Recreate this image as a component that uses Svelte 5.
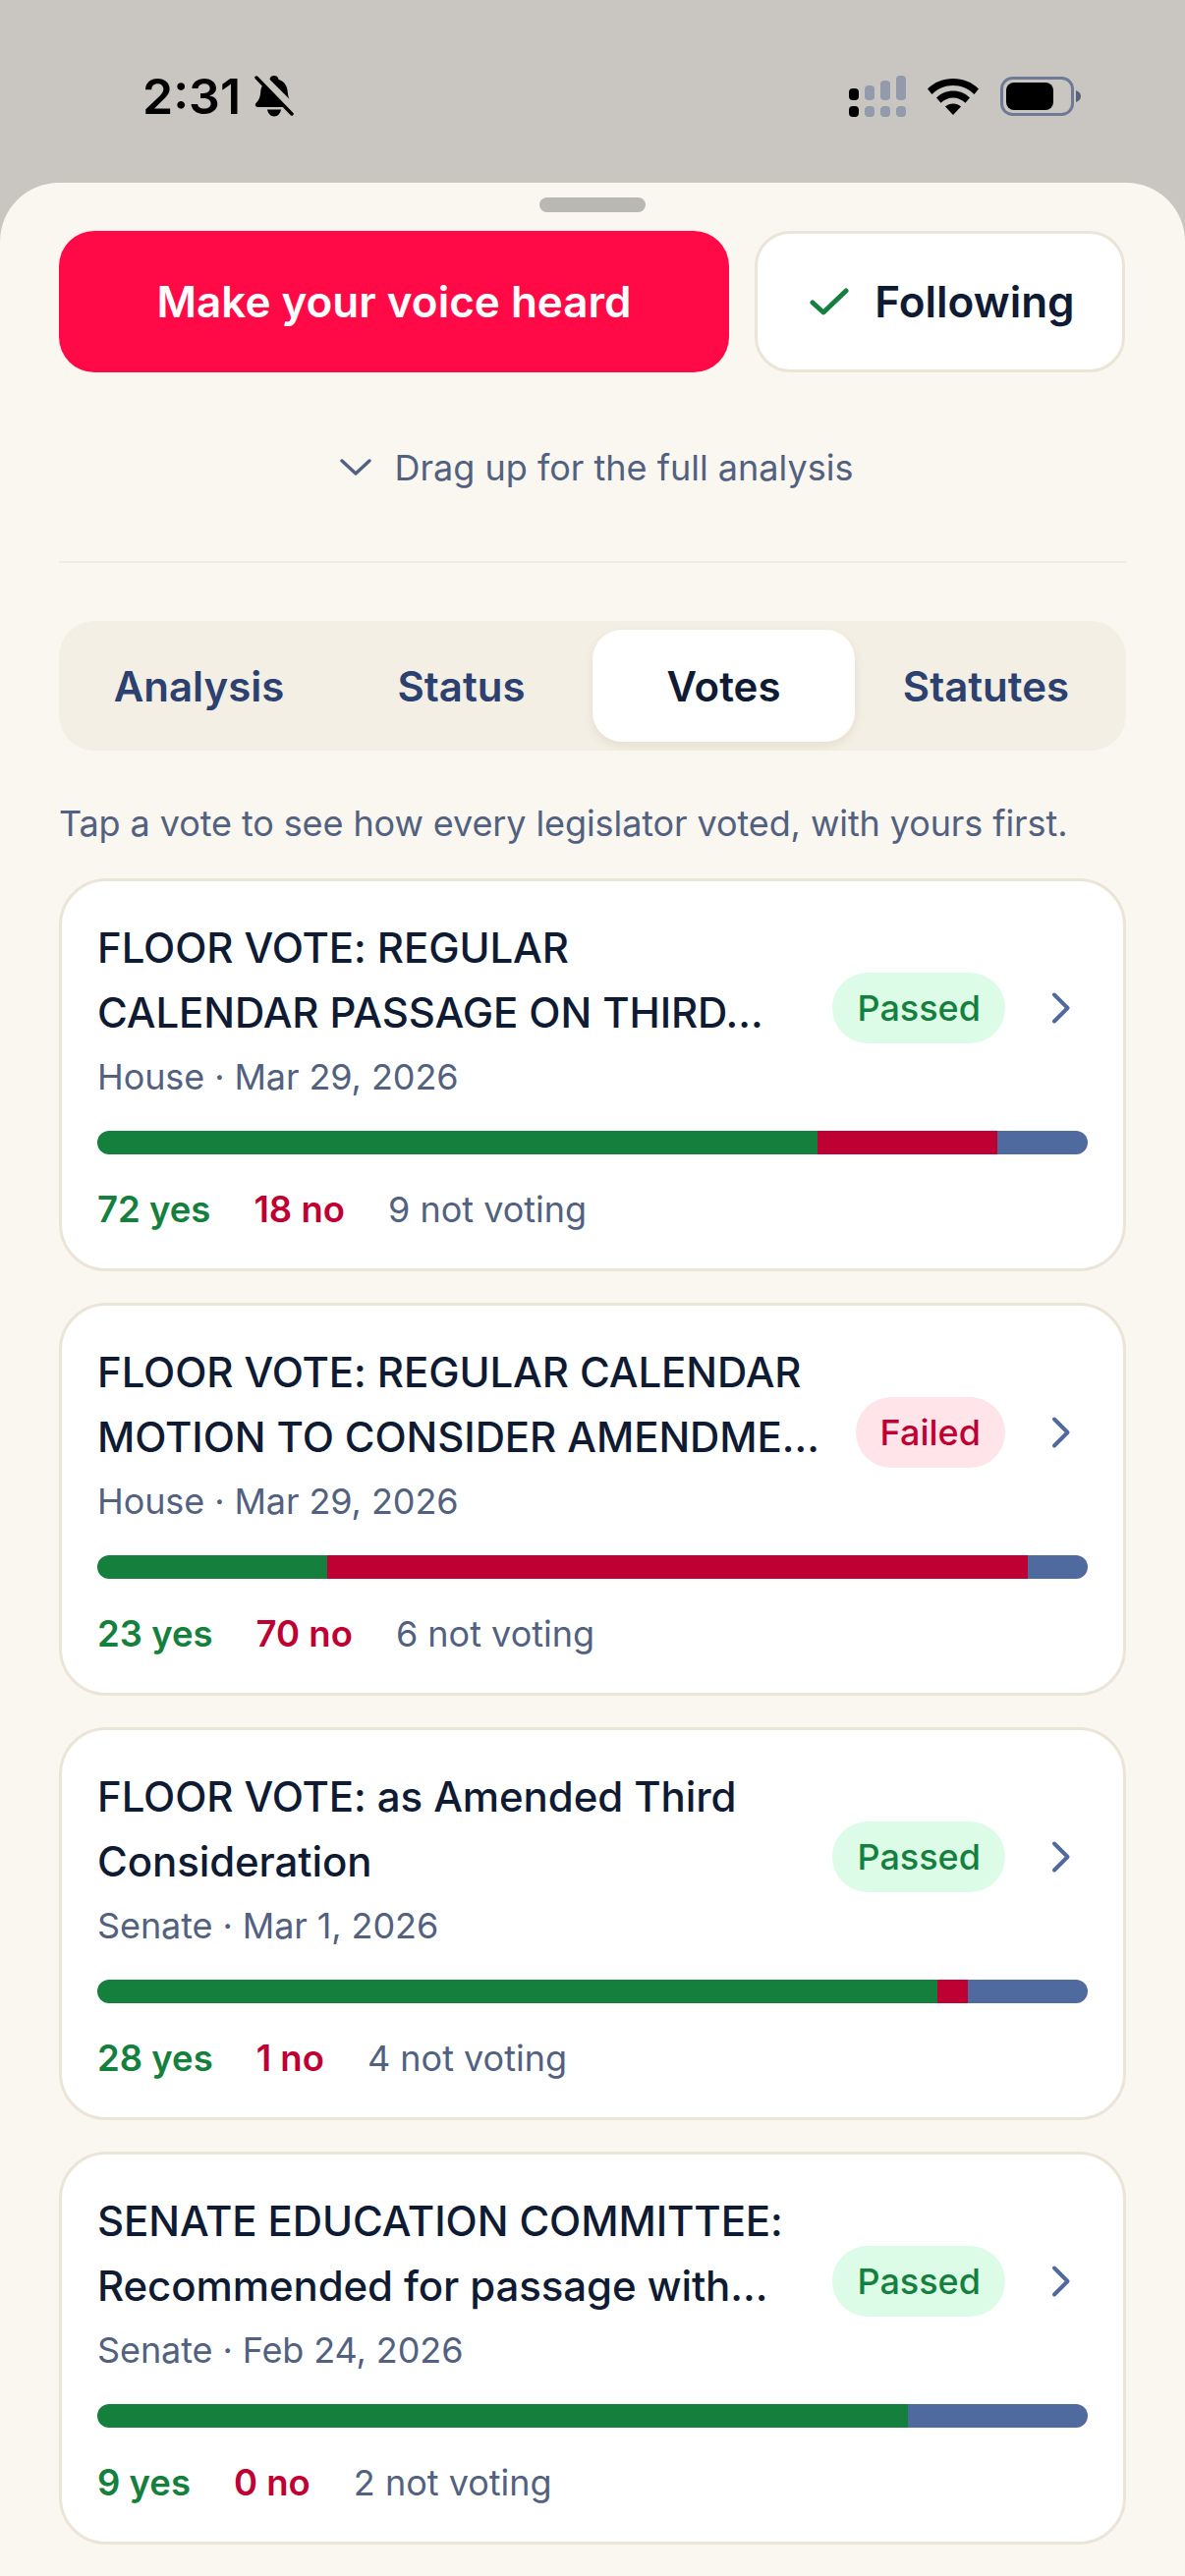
<script lang="ts">
  const tabs = ['Analysis', 'Status', 'Votes', 'Statutes'];

  const votes = [
    { title: 'FLOOR VOTE: REGULAR CALENDAR PASSAGE ON THIRD…', meta: 'House · Mar 29, 2026', status: 'Passed', yes: 72, no: 18, nv: 9 },
    { title: 'FLOOR VOTE: REGULAR CALENDAR MOTION TO CONSIDER AMENDME…', meta: 'House · Mar 29, 2026', status: 'Failed', yes: 23, no: 70, nv: 6 },
    { title: 'FLOOR VOTE: as Amended Third Consideration', meta: 'Senate · Mar 1, 2026', status: 'Passed', yes: 28, no: 1, nv: 4 },
    { title: 'SENATE EDUCATION COMMITTEE: Recommended for passage with…', meta: 'Senate · Feb 24, 2026', status: 'Passed', yes: 9, no: 0, nv: 2 }
  ];
</script>

<div class="screen">
  <header class="status-bar">
    <div class="clock">
      <span class="time">2:31</span>
      <svg class="bell" viewBox="0 0 40 42" width="40" height="42">
        <path d="M20 0c2.600 0 4.200 1.700 4.600 3.900 6.200 1.900 8.800 7 9.200 13.100 .3 4.800 1.700 7.900 4.700 11.100 1.300 1.500.5 3.900-1.700 3.900H3.200C1 32 .2 29.600 1.500 28.100c3-3.200 4.400-6.300 4.700-11.100 .4-6.100 3-11.200 9.200-13.100C15.800 1.700 17.400 0 20 0z" fill="#000"/>
        <path d="M13 34.500h14c-.7 4.200-3.500 7-7 7s-6.300-2.800-7-7z" fill="#000"/>
        <path d="M3 -3 L45 39" stroke="#c9c6c1" stroke-width="8"/>
        <path d="M2 2 L38 39" stroke="#000" stroke-width="3.500" stroke-linecap="round"/>
      </svg>
    </div>
    <div class="indicators">
      <svg viewBox="0 0 58 42" width="58" height="42">
        <g fill="#929aab">
          <rect x="16" y="10" width="10" height="15" rx="4"/>
          <rect x="32" y="5" width="10" height="20" rx="4"/>
          <rect x="48" y="0" width="10" height="25" rx="4"/>
          <rect x="16" y="31" width="10" height="11" rx="4"/>
          <rect x="32" y="31" width="10" height="11" rx="4"/>
          <rect x="48" y="31" width="10" height="11" rx="4"/>
        </g>
        <rect x="0" y="13" width="10" height="12" rx="4"/>
        <rect x="0" y="31" width="10" height="11" rx="4"/>
      </svg>
      <svg viewBox="0 0 52 38" width="52" height="38">
        <path d="M0 11.500C7 4.500 16 1 26 1s19 3.500 26 10.500L47.500 17C41.500 11 34 8 26 8S10.500 11 4.500 17z"/>
        <path d="M9 20.500C13.500 16 19.500 13.500 26 13.500s12.500 2.500 17 7l-4.500 5.200C35 22.500 30.500 20.500 26 20.500s-9 2-12.500 5.200z"/>
        <path d="M18 29.500c2.200-2 5-3 8-3s5.800 1 8 3L26 38z"/>
      </svg>
      <svg viewBox="0 0 83 40" width="83" height="40">
        <rect x="1.500" y="1.500" width="72" height="37" rx="11" fill="none" stroke="#6f7b96" stroke-width="3"/>
        <rect x="6" y="6" width="48" height="28" rx="8"/>
        <path d="M77 14c3 1 5 3 5 6s-2 5-5 6z" fill="#56617a"/>
      </svg>
    </div>
  </header>

  <main class="sheet">
    <div class="handle"></div>

    <div class="actions">
      <button class="voice">Make your voice heard</button>
      <button class="following">
        <svg viewBox="0 0 40 28" width="40" height="28">
          <path d="M3 15 L14 25 L37 3" fill="none" stroke="#15803d" stroke-width="5" stroke-linecap="round" stroke-linejoin="round"/>
        </svg>
        Following
      </button>
    </div>

    <div class="drag">
      <svg viewBox="0 0 32 18" width="32" height="18">
        <path d="M2 2 L16 15 L30 2" fill="none" stroke="#52617f" stroke-width="3.400" stroke-linecap="round" stroke-linejoin="round"/>
      </svg>
      <span>Drag up for the full analysis</span>
    </div>

    <hr class="divider" />

    <nav class="tabs">
      {#each tabs as tab}
        <div class="tab" class:active={tab === 'Votes'}>{tab}</div>
      {/each}
    </nav>

    <p class="hint">Tap a vote to see how every legislator voted, with yours first.</p>

    <div class="cards">
      {#each votes as vote}
        <article class="card">
          <div class="head">
            <div class="info">
              <h3>{vote.title}</h3>
              <p class="meta">{vote.meta}</p>
            </div>
            <span class="badge" class:failed={vote.status === 'Failed'}>{vote.status}</span>
            <svg class="chev" viewBox="0 0 48 48" width="48" height="48">
              <path d="M14 10.500 L27.500 24 L14 37.500" fill="none" stroke="#4f6a9f" stroke-width="4" stroke-linecap="round" stroke-linejoin="round"/>
            </svg>
          </div>
          <div class="bar">
            <span class="seg yes" style="flex-grow: {vote.yes}"></span>
            <span class="seg no" style="flex-grow: {vote.no}"></span>
            <span class="seg nv" style="flex-grow: {vote.nv}"></span>
          </div>
          <div class="counts">
            <span class="c-yes">{vote.yes} yes</span>
            <span class="c-no">{vote.no} no</span>
            <span class="c-nv">{vote.nv} not voting</span>
          </div>
        </article>
      {/each}
    </div>
  </main>
</div>

<style>
  :global(body) {
    margin: 0;
    background: #c9c6c1;
  }

  .screen {
    width: 1206px;
    height: 2622px;
    overflow: hidden;
    font-family: Inter, "Noto Sans", sans-serif;
    background: #c9c6c1;
  }

  .status-bar {
    height: 186px;
    box-sizing: border-box;
    padding: 10px 105px 0 145px;
    display: flex;
    align-items: center;
    justify-content: space-between;
    color: #000;
  }

  .clock {
    display: flex;
    align-items: center;
    gap: 14px;
  }

  .time {
    font-size: 50px;
    font-weight: 600;
    line-height: 1;
  }

  .indicators {
    display: flex;
    align-items: center;
    gap: 22px;
  }

  .sheet {
    background: #faf7f0;
    border-radius: 60px 60px 0 0;
    padding: 15px 60px 0;
    height: 2436px;
    box-sizing: border-box;
  }

  .handle {
    width: 108px;
    height: 15px;
    border-radius: 8px;
    background: #b9b8b5;
    margin: 0 auto 19px;
  }

  .actions {
    display: flex;
    gap: 26px;
  }

  button {
    font-family: inherit;
    height: 144px;
    box-sizing: border-box;
    border-radius: 36px;
    font-size: 44px;
    font-weight: 600;
    display: flex;
    align-items: center;
    justify-content: center;
  }

  .voice {
    width: 682px;
    border: none;
    background: #ff0a47;
    color: #fff;
  }

  .following {
    width: 377px;
    gap: 26px;
    padding: 0 0 0 5px;
    background: #fff;
    border: 3px solid #ebe5d8;
    color: #0f1b33;
  }

  .drag {
    display: flex;
    align-items: center;
    justify-content: center;
    gap: 24px;
    margin-top: 73px;
    padding-left: 8px;
    height: 48px;
    font-size: 36px;
    color: #52617f;
  }

  .divider {
    border: none;
    height: 2px;
    background: #f1ece1;
    margin: 71px 0 59px;
  }

  .tabs {
    height: 132px;
    box-sizing: border-box;
    padding: 9px;
    display: grid;
    grid-template-columns: repeat(4, 1fr);
    background: #f3efe4;
    border-radius: 36px;
  }

  .tab {
    display: flex;
    align-items: center;
    justify-content: center;
    border-radius: 30px;
    font-size: 42px;
    font-weight: 560;
    color: #2c4170;
  }

  .tab.active {
    background: #fff;
    color: #0f1b33;
    box-shadow: 0 4px 10px rgba(120, 105, 70, 0.12);
  }

  .hint {
    margin: 50px 0 32px;
    font-size: 36px;
    letter-spacing: -0.1px;
    line-height: 48px;
    color: #52617f;
  }

  .cards {
    display: flex;
    flex-direction: column;
    gap: 32px;
  }

  .card {
    height: 400px;
    box-sizing: border-box;
    background: #fff;
    border: 3px solid #ebe5d8;
    border-radius: 48px;
    padding: 35px 36px 0;
  }

  .head {
    display: flex;
    align-items: center;
    gap: 36px;
  }

  .info {
    flex: 1;
    min-width: 0;
  }

  h3 {
    margin: 0;
    font-size: 42px;
    line-height: 66px;
    font-weight: 540;
    letter-spacing: -0.1px;
    color: #0f1b33;
  }

  .meta {
    margin: 8px 0 0;
    font-size: 36px;
    letter-spacing: -0.1px;
    line-height: 48px;
    color: #52617f;
  }

  .badge {
    flex: none;
    height: 72px;
    padding: 0 25px;
    display: flex;
    align-items: center;
    border-radius: 36px;
    background: #dcfce7;
    color: #15803d;
    font-size: 36px;
    font-weight: 500;
  }

  .badge.failed {
    background: #ffe4e9;
    color: #be0033;
  }

  .chev {
    flex: none;
  }

  .bar {
    display: flex;
    height: 24px;
    border-radius: 12px;
    overflow: hidden;
    margin-top: 31px;
  }

  .seg {
    flex-basis: 0;
  }

  .yes { background: #15803d; }
  .no { background: #be0033; }
  .nv { background: #4f6a9f; }

  .counts {
    display: flex;
    align-items: baseline;
    gap: 44px;
    margin-top: 32px;
    font-size: 36px;
    line-height: 48px;
  }

  .c-yes, .c-no {
    font-size: 36.5px;
    font-weight: 600;
  }

  .c-yes { color: #15803d; }
  .c-no { color: #be0033; }
  .c-nv { color: #52617f; }
</style>
